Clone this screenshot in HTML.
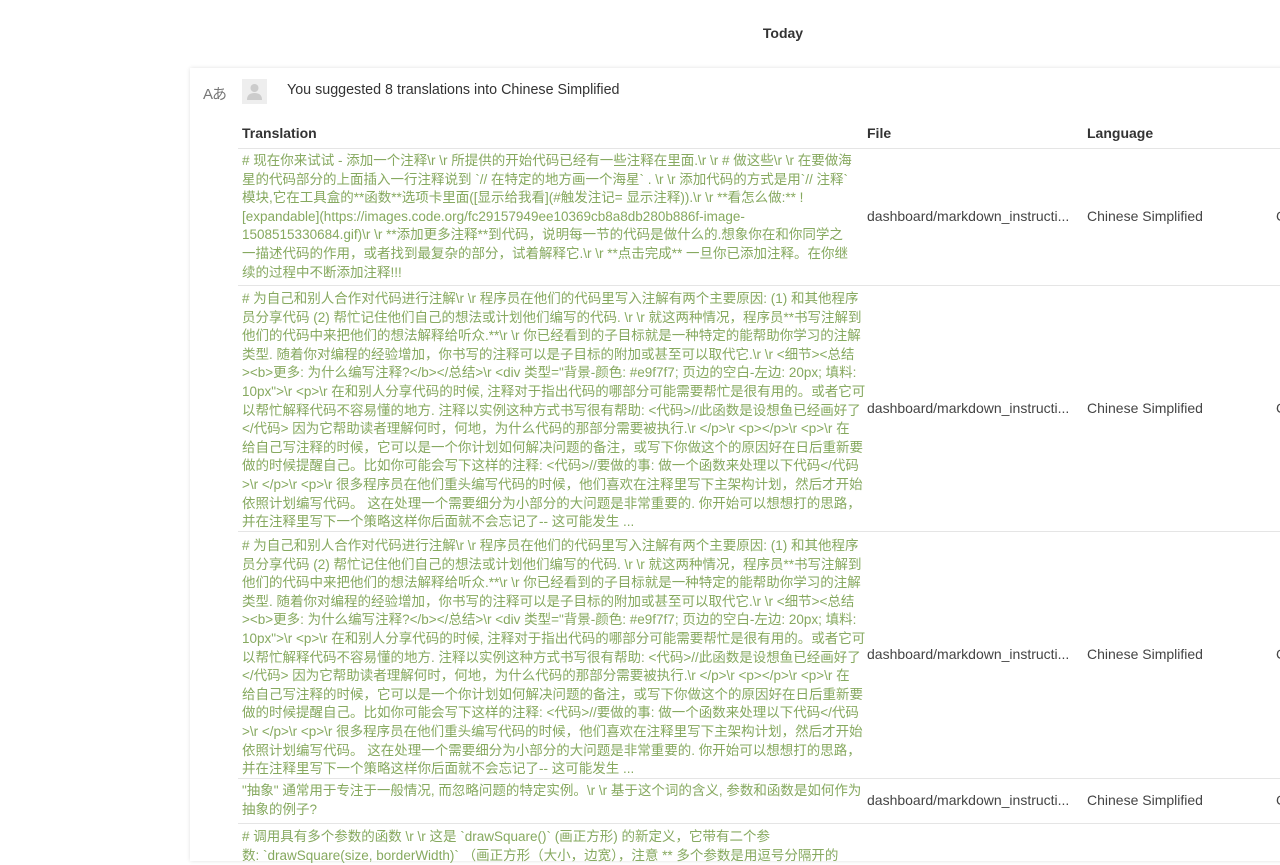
<!DOCTYPE html>
<html><head><meta charset="utf-8"><style>
html,body{margin:0;width:1280px;height:861px;overflow:hidden;background:#fff;font-family:"Liberation Sans","Noto Sans CJK SC",sans-serif;color:#333}
.today{position:absolute;left:0;width:1566px;top:25px;text-align:center;font-size:14px;font-weight:bold;color:#333}
.card{position:absolute;left:190px;top:68px;width:1100px;height:793px;background:#fff;box-shadow:0 0 4px rgba(0,0,0,0.12)}
.icon{position:absolute;left:203px;top:83px;font-size:15px;color:#777;letter-spacing:-1px}
.av{position:absolute;left:242px;top:79px;width:25px;height:25px;background:#eee}
.hdr{position:absolute;left:287px;top:82px;font-size:14.3px;color:#333}
.th{position:absolute;top:125px;font-size:14px;font-weight:bold;color:#333}
.line{position:absolute;left:238px;width:1042px;height:1px;background:#e5e5e5}
.tr{position:absolute;left:242px;font-size:13.5px;line-height:18.6px;color:#86a95f;white-space:nowrap}
.cell{position:absolute;font-size:14px;color:#444;white-space:nowrap}
</style></head><body>
<div class="today">Today</div>
<div class="card"></div>
<div class="icon">Aあ</div>
<div class="av"><svg width="25" height="25"><circle cx="12.5" cy="9" r="4" fill="#ccc"/><path d="M5 21 Q5 14 12.5 14 Q20 14 20 21Z" fill="#ccc"/></svg></div>
<div class="hdr">You suggested 8 translations into Chinese Simplified</div>
<div class="th" style="left:242px">Translation</div>
<div class="th" style="left:867px">File</div>
<div class="th" style="left:1087px">Language</div>
<div class="line" style="top:148px"></div>
<div class="line" style="top:285px"></div>
<div class="line" style="top:531px"></div>
<div class="line" style="top:778px"></div>
<div class="line" style="top:823px"></div>

<div class="tr" style="top:152px"># 现在你来试试 - 添加一个注释\r \r 所提供的开始代码已经有一些注释在里面.\r \r # 做这些\r \r 在要做海<br>星的代码部分的上面插入一行注释说到 `// 在特定的地方画一个海星` . \r \r 添加代码的方式是用`// 注释`<br>模块,它在工具盒的**函数**选项卡里面([显示给我看](#触发注记= 显示注释)).\r \r **看怎么做:** !<br>[expandable](https://images.code.org/fc29157949ee10369cb8a8db280b886f-image-<br>1508515330684.gif)\r \r **添加更多注释**到代码，说明每一节的代码是做什么的.想象你在和你同学之<br>一描述代码的作用，或者找到最复杂的部分，试着解释它.\r \r **点击完成** 一旦你已添加注释。在你继<br>续的过程中不断添加注释!!!</div>
<div class="cell" style="left:867px;top:208px">dashboard/markdown_instructi...</div>
<div class="cell" style="left:1087px;top:208px">Chinese Simplified</div>
<div class="cell" style="left:1276px;top:208px">C</div>

<div class="tr" style="top:290px"># 为自己和别人合作对代码进行注解\r \r 程序员在他们的代码里写入注解有两个主要原因: (1) 和其他程序<br>员分享代码 (2) 帮忙记住他们自己的想法或计划他们编写的代码. \r \r 就这两种情况，程序员**书写注解到<br>他们的代码中来把他们的想法解释给听众.**\r \r 你已经看到的子目标就是一种特定的能帮助你学习的注解<br>类型. 随着你对编程的经验增加，你书写的注释可以是子目标的附加或甚至可以取代它.\r \r &lt;细节&gt;&lt;总结<br>&gt;&lt;b&gt;更多: 为什么编写注释?&lt;/b&gt;&lt;/总结&gt;\r &lt;div 类型="背景-颜色: #e9f7f7; 页边的空白-左边: 20px; 填料:<br>10px"&gt;\r &lt;p&gt;\r 在和别人分享代码的时候, 注释对于指出代码的哪部分可能需要帮忙是很有用的。或者它可<br>以帮忙解释代码不容易懂的地方. 注释以实例这种方式书写很有帮助: &lt;代码&gt;//此函数是设想鱼已经画好了<br>&lt;/代码&gt; 因为它帮助读者理解何时，何地，为什么代码的那部分需要被执行.\r &lt;/p&gt;\r &lt;p&gt;&lt;/p&gt;\r &lt;p&gt;\r 在<br>给自己写注释的时候，它可以是一个你计划如何解决问题的备注，或写下你做这个的原因好在日后重新要<br>做的时候提醒自己。比如你可能会写下这样的注释: &lt;代码&gt;//要做的事: 做一个函数来处理以下代码&lt;/代码<br>&gt;\r &lt;/p&gt;\r &lt;p&gt;\r 很多程序员在他们重头编写代码的时候，他们喜欢在注释里写下主架构计划，然后才开始<br>依照计划编写代码。 这在处理一个需要细分为小部分的大问题是非常重要的. 你开始可以想想打的思路，<br>并在注释里写下一个策略这样你后面就不会忘记了-- 这可能发生 ...</div>
<div class="cell" style="left:867px;top:400px">dashboard/markdown_instructi...</div>
<div class="cell" style="left:1087px;top:400px">Chinese Simplified</div>
<div class="cell" style="left:1276px;top:400px">C</div>

<div class="tr" style="top:537px"># 为自己和别人合作对代码进行注解\r \r 程序员在他们的代码里写入注解有两个主要原因: (1) 和其他程序<br>员分享代码 (2) 帮忙记住他们自己的想法或计划他们编写的代码. \r \r 就这两种情况，程序员**书写注解到<br>他们的代码中来把他们的想法解释给听众.**\r \r 你已经看到的子目标就是一种特定的能帮助你学习的注解<br>类型. 随着你对编程的经验增加，你书写的注释可以是子目标的附加或甚至可以取代它.\r \r &lt;细节&gt;&lt;总结<br>&gt;&lt;b&gt;更多: 为什么编写注释?&lt;/b&gt;&lt;/总结&gt;\r &lt;div 类型="背景-颜色: #e9f7f7; 页边的空白-左边: 20px; 填料:<br>10px"&gt;\r &lt;p&gt;\r 在和别人分享代码的时候, 注释对于指出代码的哪部分可能需要帮忙是很有用的。或者它可<br>以帮忙解释代码不容易懂的地方. 注释以实例这种方式书写很有帮助: &lt;代码&gt;//此函数是设想鱼已经画好了<br>&lt;/代码&gt; 因为它帮助读者理解何时，何地，为什么代码的那部分需要被执行.\r &lt;/p&gt;\r &lt;p&gt;&lt;/p&gt;\r &lt;p&gt;\r 在<br>给自己写注释的时候，它可以是一个你计划如何解决问题的备注，或写下你做这个的原因好在日后重新要<br>做的时候提醒自己。比如你可能会写下这样的注释: &lt;代码&gt;//要做的事: 做一个函数来处理以下代码&lt;/代码<br>&gt;\r &lt;/p&gt;\r &lt;p&gt;\r 很多程序员在他们重头编写代码的时候，他们喜欢在注释里写下主架构计划，然后才开始<br>依照计划编写代码。 这在处理一个需要细分为小部分的大问题是非常重要的. 你开始可以想想打的思路，<br>并在注释里写下一个策略这样你后面就不会忘记了-- 这可能发生 ...</div>
<div class="cell" style="left:867px;top:646px">dashboard/markdown_instructi...</div>
<div class="cell" style="left:1087px;top:646px">Chinese Simplified</div>
<div class="cell" style="left:1276px;top:646px">C</div>

<div class="tr" style="top:782px">"抽象" 通常用于专注于一般情况, 而忽略问题的特定实例。\r \r 基于这个词的含义, 参数和函数是如何作为<br>抽象的例子?</div>
<div class="cell" style="left:867px;top:792px">dashboard/markdown_instructi...</div>
<div class="cell" style="left:1087px;top:792px">Chinese Simplified</div>
<div class="cell" style="left:1276px;top:792px">C</div>

<div class="tr" style="top:828px"># 调用具有多个参数的函数 \r \r 这是 `drawSquare()` (画正方形) 的新定义，它带有二个参<br>数: `drawSquare(size, borderWidth)` （画正方形（大小，边宽），注意 ** 多个参数是用逗号分隔开的</div>
</body></html>
